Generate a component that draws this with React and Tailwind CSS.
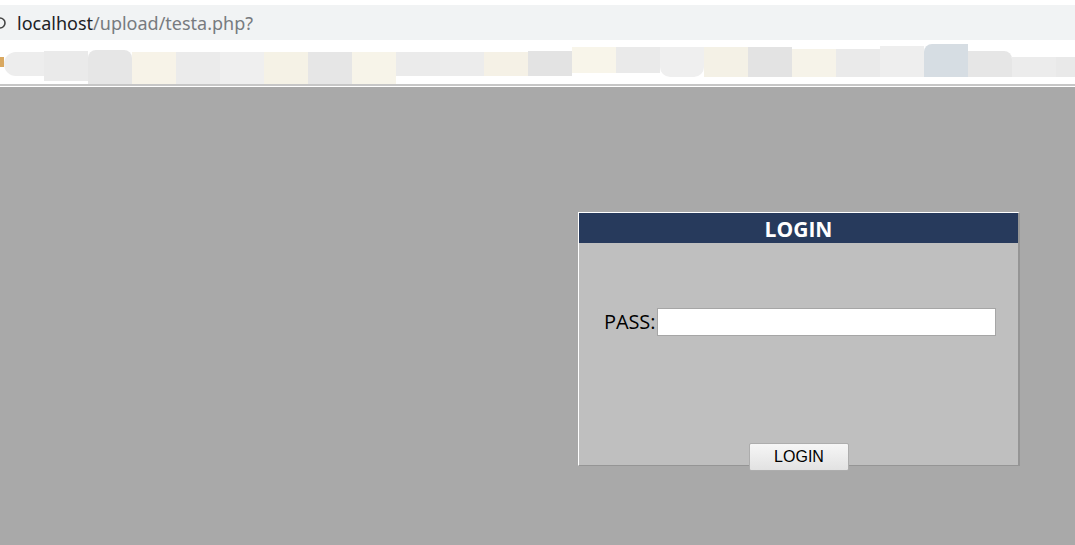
import React from "react";

const blocks = [
  { w: "w-[44px]", c: "bg-[#eaeaea] mt-[11px] h-[30px]" },
  { w: "w-[44px]", c: "bg-[#e6e6e6] mt-[10px] h-[37px] rounded-t-[8px]" },
  { w: "w-[44px]", c: "bg-[#f7f3e8] mt-[12px] h-[34px]" },
  { w: "w-[44px]", c: "bg-[#ebebeb] mt-[12px] h-[34px]" },
  { w: "w-[44px]", c: "bg-[#efefef] mt-[12px] h-[34px]" },
  { w: "w-[44px]", c: "bg-[#f5f2e6] mt-[12px] h-[34px]" },
  { w: "w-[44px]", c: "bg-[#e6e6e6] mt-[12px] h-[34px]" },
  { w: "w-[44px]", c: "bg-[#f7f4e9] mt-[12px] h-[34px]" },
  { w: "w-[44px]", c: "bg-[#ebebeb] mt-[12px] h-[24px]" },
  { w: "w-[44px]", c: "bg-[#ececec] mt-[12px] h-[24px]" },
  { w: "w-[44px]", c: "bg-[#f5f1e6] mt-[12px] h-[24px]" },
  { w: "w-[44px]", c: "bg-[#e3e3e3] mt-[11px] h-[25px]" },
  { w: "w-[44px]", c: "bg-[#f8f5ea] mt-[7px] h-[26px]" },
  { w: "w-[44px]", c: "bg-[#eaeaea] mt-[7px] h-[26px]" },
  { w: "w-[44px]", c: "bg-[#efefef] mt-[7px] h-[30px] rounded-b-[10px]" },
  { w: "w-[44px]", c: "bg-[#f4f1e6] mt-[7px] h-[30px]" },
  { w: "w-[44px]", c: "bg-[#e3e3e3] mt-[7px] h-[30px]" },
  { w: "w-[44px]", c: "bg-[#f6f3e9] mt-[9px] h-[28px]" },
  { w: "w-[44px]", c: "bg-[#eaeaea] mt-[9px] h-[28px]" },
  { w: "w-[44px]", c: "bg-[#eeeeee] mt-[6px] h-[31px]" },
  { w: "w-[44px]", c: "bg-[#d6dde3] mt-[4px] h-[33px] rounded-tl-[8px]" },
  { w: "w-[44px]", c: "bg-[#e6e6e6] mt-[11px] h-[26px] rounded-tr-[8px]" },
  { w: "w-[44px]", c: "bg-[#ececec] mt-[17px] h-[20px]" },
  { w: "w-[19px]", c: "bg-[#e9e9e9] mt-[17px] h-[20px]" },
];

export default function App() {
  return (
    <div className="w-[1075px] h-[545px] overflow-hidden flex flex-col bg-white">
      {/* address bar */}
      <div className="h-[5px] bg-white" />
      <div className="h-[35px] bg-[#f1f3f4] flex items-center">
        <svg width="6" height="14" viewBox="0 0 6 14" className="shrink-0">
          <circle cx="0" cy="7" r="5" fill="none" stroke="#444" strokeWidth="1.6" />
        </svg>
        <div
          className="ml-[11px] text-[18px] leading-none"
          style={{ fontFamily: "'Noto Sans', 'Open Sans', sans-serif" }}
        >
          <span className="text-[#202124]">localhost</span>
          <span className="text-[#777b80]">/upload/testa.php?</span>
        </div>
      </div>
      {/* bookmarks bar (blurred) */}
      <div className="h-[44px] bg-white flex items-start">
        <div className="w-[4px] h-[10px] mt-[17px] bg-[#d9a860] shrink-0" />
        <div className="w-[40px] h-[24px] mt-[12px] bg-[#ededed] rounded-l-[14px] shrink-0" />
        {blocks.map((b, i) => (
          <div key={i} className={`${b.w} ${b.c} shrink-0`} />
        ))}
      </div>
      <div className="h-[2px] bg-[#c6c6c6]" />
      <div className="h-[1px] bg-white" />
      {/* page */}
      <div className="flex-1 bg-[#a9a9a9] pt-[125px] pl-[578px]">
        <div className="w-[442px] flex flex-col border-t border-l border-t-white border-l-white border-r-2 border-b border-r-[#959595] border-b-[#959595] bg-[#bfbfbf]">
          <div
            className="h-[30px] pt-[2px] bg-[#273a5c] text-white font-bold text-[21px] flex items-center justify-center leading-none"
            style={{ fontFamily: "'Open Sans', 'Noto Sans', sans-serif" }}
          >
            LOGIN
          </div>
          <div className="h-[222px] flex flex-col">
            <div className="mt-[65px] flex items-center pl-[25px]">
              <span
                className="text-[20px] leading-none text-black tracking-[-0.1px]"
                style={{ fontFamily: "'Open Sans', 'Noto Sans', sans-serif" }}
              >
                PASS:
              </span>
              <input
                type="password"
                className="ml-[2px] w-[339px] h-[28px] bg-white border border-[#a6a6a6] outline-none"
              />
            </div>
            <div className="mt-auto mb-[-6px] flex justify-center pl-[1px]">
              <button
                className="w-[100px] h-[28px] border border-[#adadad] rounded-[2px] bg-linear-to-b from-[#f6f6f6] to-[#e2e2e2] text-[16px] text-black leading-none"
                style={{ fontFamily: "'Liberation Sans', Arial, sans-serif" }}
              >
                LOGIN
              </button>
            </div>
          </div>
        </div>
      </div>
    </div>
  );
}
